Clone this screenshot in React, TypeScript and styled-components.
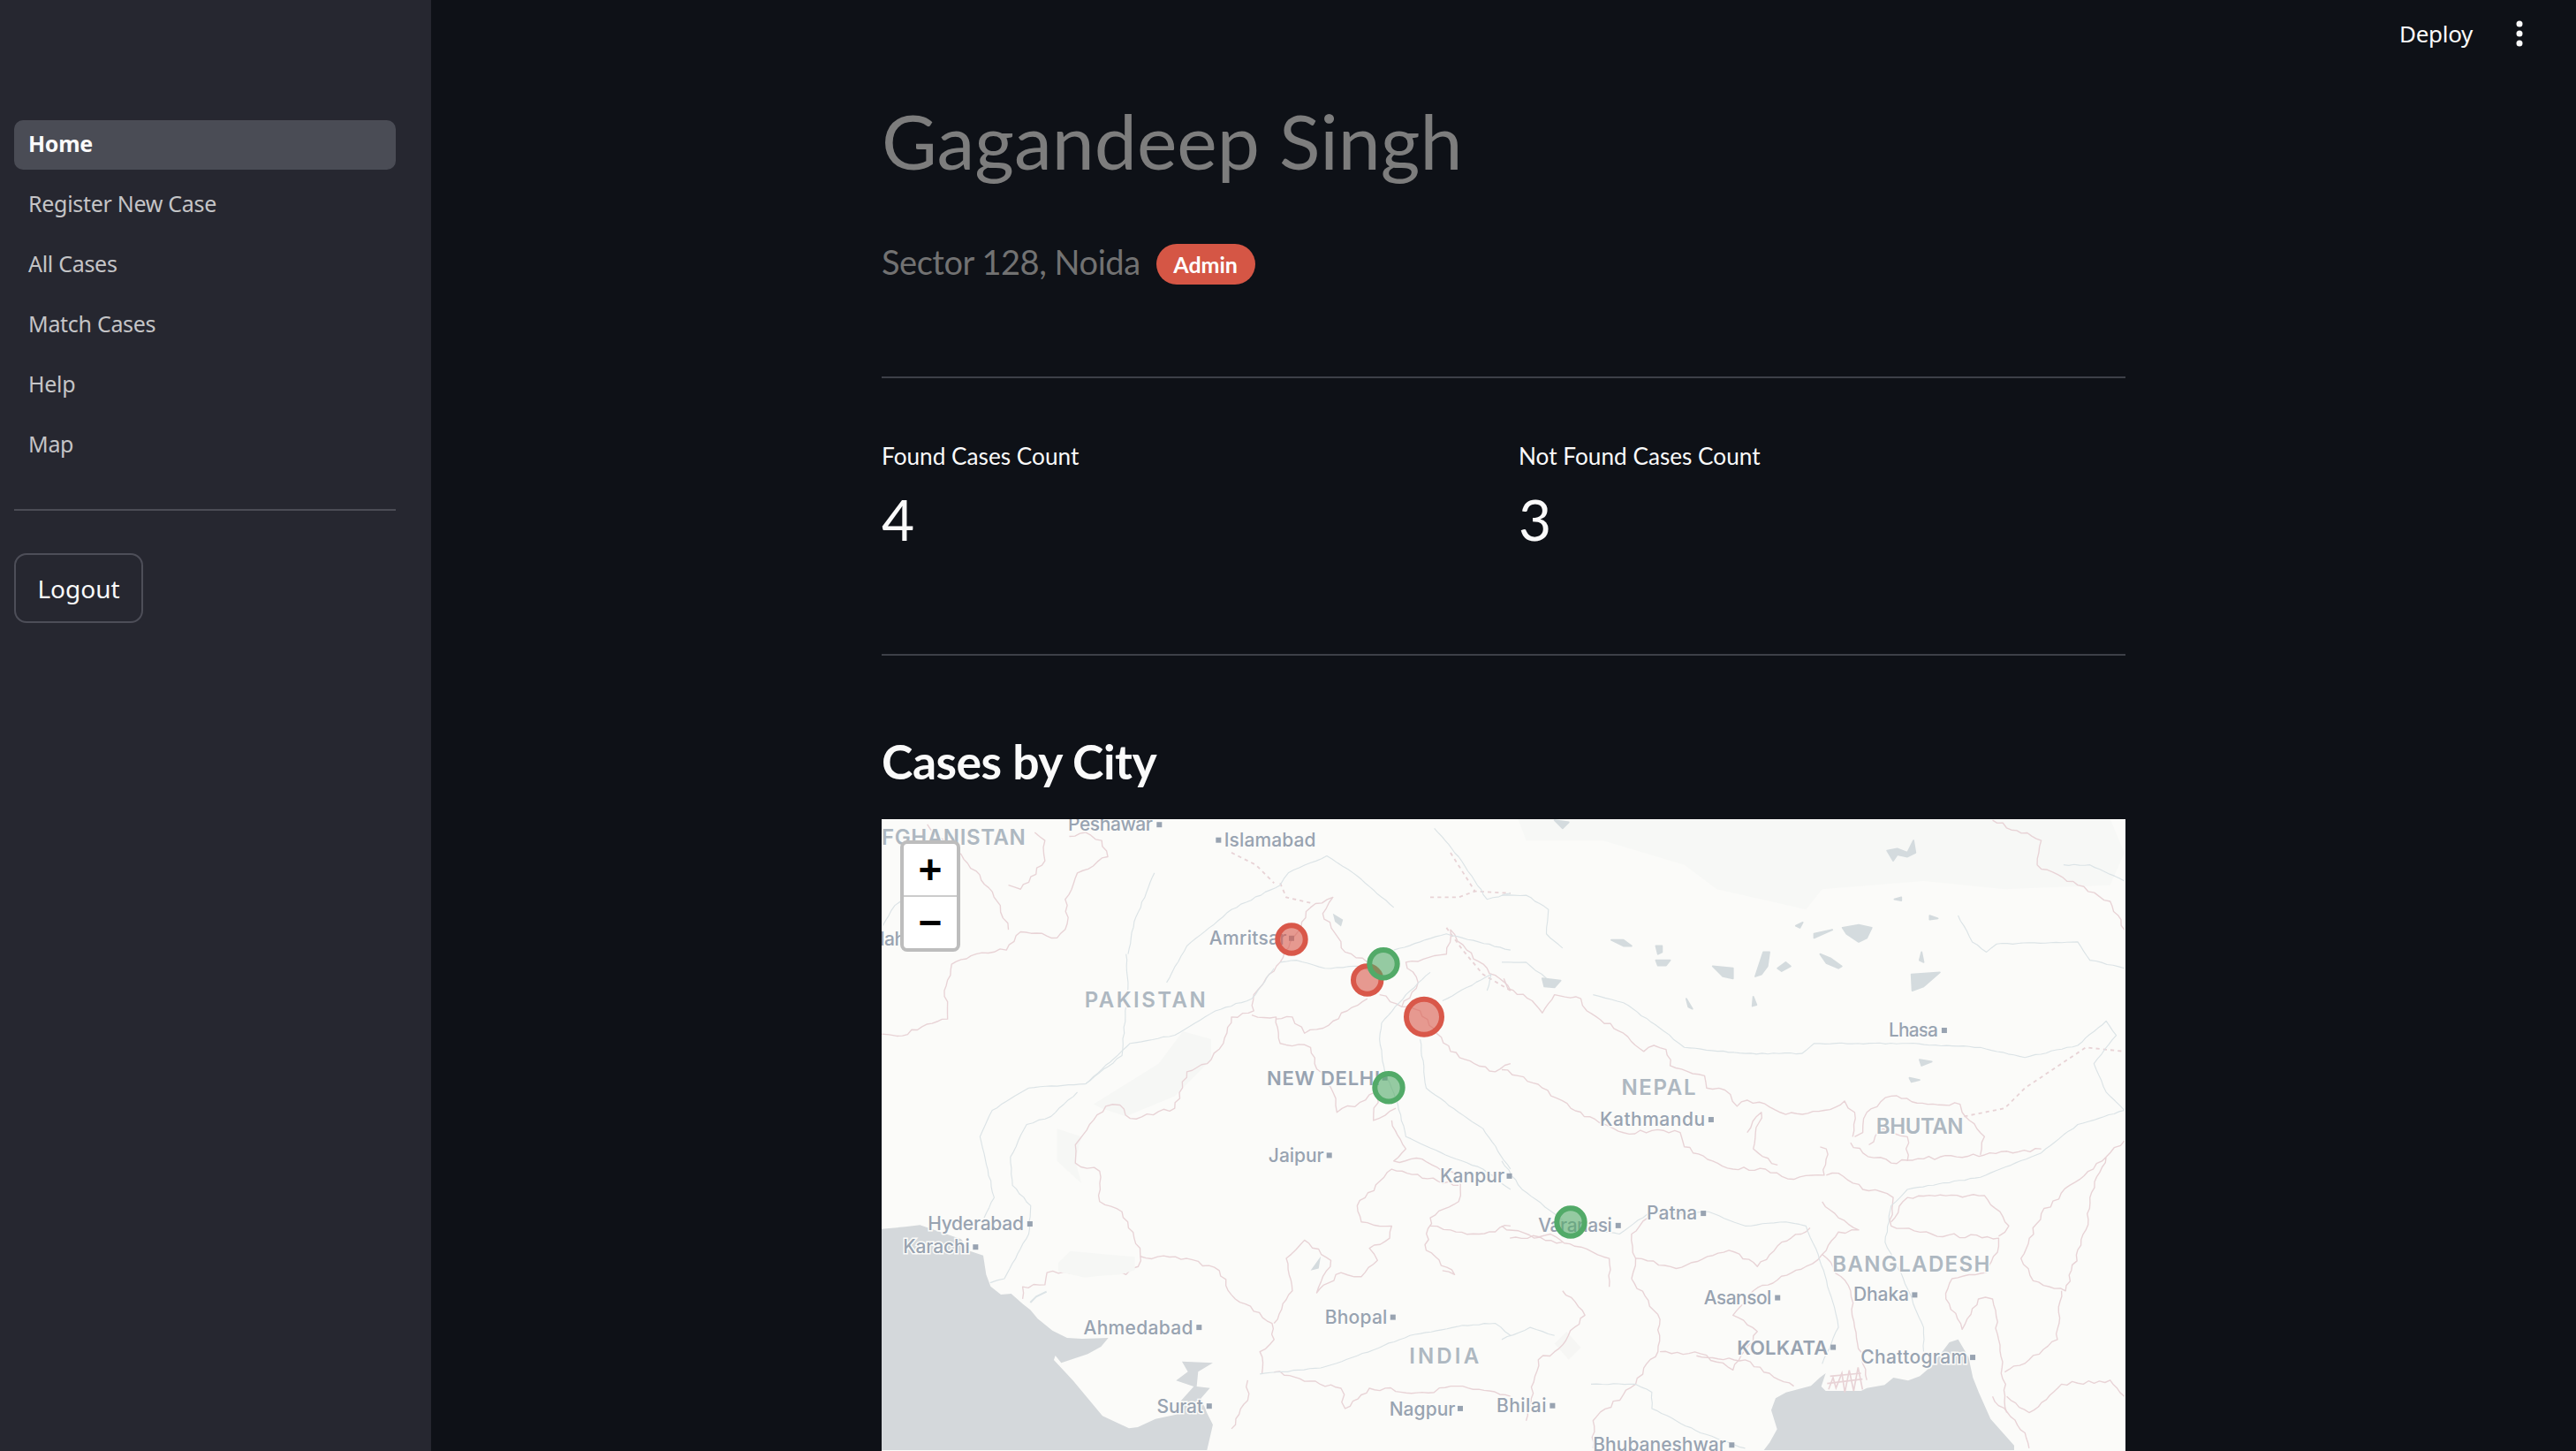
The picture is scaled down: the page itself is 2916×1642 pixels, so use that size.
import React from 'react';
import styled, { createGlobalStyle } from 'styled-components';

const GlobalStyle = createGlobalStyle`
  html, body {
    margin: 0;
    padding: 0;
    height: 100%;
    overflow: hidden;
    background: #0e1117;
  }
`;

const Page = styled.div`
  display: grid;
  grid-template-columns: 488px 1fr;
  height: 1642px;
  overflow: hidden;
  color: #fafafa;
  font-family: 'Noto Sans', sans-serif;
`;

const Sidebar = styled.aside`
  background: #262730;
  padding: 136px 40px 0 16px;
`;

const NavList = styled.nav`
  display: flex;
  flex-direction: column;
  gap: 12px;
`;

const NavItem = styled.a<{ $active?: boolean }>`
  display: flex;
  align-items: center;
  box-sizing: border-box;
  height: 56px;
  padding: 0 16px 5px;
  border-radius: 10px;
  font-size: 25px;
  letter-spacing: -0.3px;
  font-weight: ${({ $active }) => ($active ? 700 : 400)};
  color: ${({ $active }) => ($active ? '#fafafa' : 'rgba(250, 250, 250, .75)')};
  background: ${({ $active }) => ($active ? '#4a4c55' : 'transparent')};
`;

const SideRule = styled.hr`
  margin: 44px 0 48px;
  border: 0;
  border-top: 2px solid #4b4c55;
`;

const LogoutButton = styled.button`
  width: 146px;
  height: 79px;
  border: 2px solid #4d4e58;
  border-radius: 14px;
  background: transparent;
  color: #fafafa;
  font-family: 'Noto Sans', sans-serif;
  font-size: 28px;
  padding: 0;
`;

const Main = styled.main`
  display: flex;
  flex-direction: column;
  background: #0e1117;
`;

const Toolbar = styled.header`
  display: flex;
  justify-content: flex-end;
  align-items: center;
  gap: 49px;
  height: 76px;
  padding-right: 60px;
  flex: none;
`;

const DeployText = styled.span`
  font-size: 26px;
  letter-spacing: -0.3px;
  color: #fafafa;
`;

const MenuDots = styled.svg`
  width: 8px;
  height: 30px;
  fill: #fafafa;
`;

const Content = styled.div`
  width: 1408px;
  margin: 0 auto;
  font-family: Lato, sans-serif;
`;

const Title = styled.h1`
  margin: 30px 0 0;
  font-size: 86px;
  line-height: 106px;
  font-weight: 400;
  color: #7d7d7d;
`;

const SubRow = styled.div`
  display: flex;
  align-items: center;
  gap: 18px;
  margin-top: 64px;
  height: 46px;
`;

const Address = styled.span`
  margin-bottom: 6px;
  font-size: 38px;
  letter-spacing: -0.45px;
  color: #727272;
`;

const Badge = styled.span`
  display: flex;
  align-items: center;
  justify-content: center;
  width: 112px;
  height: 46px;
  border-radius: 23px;
  background: #d55645;
  color: #fff;
  font-size: 25px;
  font-weight: 700;
`;

const Rule = styled.hr`
  margin: 0;
  border: 0;
  border-top: 2px solid #3d4048;
`;

const TopRule = styled(Rule)`
  margin-top: 104px;
`;

const Stats = styled.div`
  display: grid;
  grid-template-columns: 721px 1fr;
  height: 312px;
  padding-top: 70px;
  box-sizing: border-box;
`;

const Stat = styled.div`
  display: flex;
  flex-direction: column;
`;

const StatLabel = styled.div`
  font-size: 26.2px;
  line-height: 36px;
  color: #fafafa;
`;

const StatValue = styled.div`
  margin-top: 12px;
  font-size: 64px;
  line-height: 84px;
  color: #fafafa;
`;

const SectionTitle = styled.h2`
  margin: 83px 0 0;
  font-size: 53.5px;
  line-height: 72px;
  font-weight: 700;
  color: #fafafa;
  letter-spacing: -0.5px;
`;

const MapFrame = styled.div`
  position: relative;
  height: 716px;
  margin-top: 30px;
  overflow: hidden;
  background: #fbfbf9;
`;

const MapSvg = styled.svg`
  display: block;
  width: 1408px;
  height: 716px;
`;

const ZoomControl = styled.div`
  position: absolute;
  left: 21px;
  top: 24px;
  width: 60px;
  border: 4px solid #bdbdbd;
  border-radius: 8px;
  overflow: hidden;
  background: #fff;
`;

const ZoomButton = styled.div<{ $top?: boolean }>`
  display: flex;
  align-items: center;
  justify-content: center;
  height: 58px;
  color: #000;
  font-family: 'Liberation Sans', sans-serif;
  font-size: 46px;
  font-weight: 700;
  line-height: 1;
  border-bottom: ${({ $top }) => ($top ? '2px solid #ccc' : 'none')};
`;

const labelSizes = { city: 21, capital: 22, country: 24 };

const PlaceLabel = styled.text<{ $kind: 'city' | 'country' | 'capital' }>`
  font-family: Inter, sans-serif;
  font-size: ${({ $kind }) => labelSizes[$kind]}px;
  font-weight: ${({ $kind }) => ($kind === 'city' ? 500 : 600)};
  fill: ${({ $kind }) => ($kind === 'country' ? '#aeb8c1' : '#98a3b1')};
  stroke: #fbfbf9;
  stroke-width: 3px;
  paint-order: stroke;
`;

const S = 1 / 2.178;
const BORDER = '#e8d3d6';

// wiggle a hand traced line so it reads as a map border and not a polygon
const noise = (n: number) => {
  const v = Math.sin(n * 12.9898) * 43758.5453;
  return v - Math.floor(v) - 0.5;
};

const roughen = (points: string, amp: number, step = 13) => {
  const pts = points.split(' ').map((p) => p.split(',').map(Number));
  const out: string[] = [];
  let seed = pts[0][0] * 0.37 + pts[0][1] * 0.11;
  pts.forEach((p, i) => {
    const next = pts[i + 1];
    out.push(p.join(','));
    if (!next) return;
    const dx = next[0] - p[0];
    const dy = next[1] - p[1];
    const len = Math.hypot(dx, dy);
    const count = Math.floor(len / step);
    for (let k = 1; k < count; k++) {
      seed += 1;
      const t = k / count;
      const d = noise(seed) * amp * 2;
      out.push(`${(p[0] + dx * t - (dy / len) * d).toFixed(1)},${(p[1] + dy * t + (dx / len) * d).toFixed(1)}`);
    }
  });
  return out.join(' ');
};

// x, baseline, right edge in the crop's units, then the city square if any
type Label = [string, number, number, number, 'city' | 'country' | 'capital', number?, number?];

const labels: Label[] = [
  ['AFGHANISTAN', -22, 80, 372, 'country'],
  ['Peshawar', 477, 45, 686, 'city', 702, 31],
  ['Islamabad', 862, 85, 1088, 'city', 848, 69],
  ['Kandahar', -85, 328, 118, 'city'],
  ['Amritsar', 825, 326, 1016, 'city', 1028, 311],
  ['PAKISTAN', 518, 482, 816, 'country'],
  ['NEW DELHI', 967, 672, 1246, 'capital', 1258, 655],
  ['Jaipur', 971, 862, 1108, 'city', 1121, 846],
  ['Kanpur', 1394, 912, 1553, 'city', 1565, 897],
  ['Hyderabad', 131, 1031, 368, 'city', 383, 1015],
  ['Karachi', 70, 1087, 235, 'city', 249, 1072],
  ['Ahmedabad', 515, 1287, 785, 'city', 800, 1270],
  ['Bhopal', 1110, 1262, 1264, 'city', 1278, 1245],
  ['INDIA', 1318, 1360, 1490, 'country'],
  ['Surat', 696, 1481, 810, 'city', 825, 1464],
  ['Nagpur', 1269, 1487, 1432, 'city', 1444, 1470],
];

const labelsRight: Label[] = [
  ['Bhilai', -13, 1478, 110, 'city', 125, 1463],
  ['Lhasa', 954, 553, 1076, 'city', 1091, 538],
  ['NEPAL', 295, 698, 478, 'country'],
  ['Kathmandu', 242, 774, 501, 'city', 516, 758],
  ['BHUTAN', 923, 792, 1138, 'country'],
  ['Varanasi', 90, 1034, 272, 'city', 287, 1019],
  ['Patna', 357, 1005, 482, 'city', 497, 989],
  ['Asansol', 498, 1213, 665, 'city', 680, 1197],
  ['BANGLADESH', 815, 1132, 1203, 'country'],
  ['Dhaka', 867, 1205, 1004, 'city', 1018, 1190],
  ['KOLKATA', 580, 1337, 804, 'capital', 817, 1319],
  ['Chattogram', 885, 1360, 1148, 'city', 1161, 1344],
  ['Bhubaneshwar', 225, 1575, 553, 'city', 567, 1560],
];

const bordersLeft = [
  '1000,370 965,410 935,450 935,490 880,505 860,570 830,610 770,640 740,730 700,738 630,755 605,722 570,725 530,770 495,820 495,865 555,885 555,960 610,985 640,1050 655,1090 650,1120 620,1140 560,1125 510,1135 425,1135 420,1165 365,1170 365,1200',
  '17,547 55,552 180,510 172,440 190,375 250,350 325,340 360,295 450,310 475,275 470,215 500,150 575,110 560,70 520,50 480,60',
  '330,180 360,190 420,120 420,70 395,50',
  '130,30 250,145 310,230 330,290',
  '655,1095 770,1100 850,1130 880,1190 980,1260 985,1300 950,1330 955,1385',
  '930,500 990,505 1000,570 1075,580 1085,620 1130,690 1140,740 1210,710 1235,690',
  '1000,370 1075,235 1130,210 1105,250 1160,345 1215,370',
  '1215,460 1165,490 1120,525 1060,545 1030,505 990,510',
  '1285,730 1230,760 1240,700',
  '1275,760 1310,830 1280,860 1350,855 1440,900 1440,960 1370,1000 1360,1080 1430,1140 1400,1130',
  '1440,920 1275,880 1190,970 1200,1010 1275,1020 1270,1050 1220,1075 1240,1105 1200,1145 1150,1135 1090,1185 1125,1105 1060,1055 1015,1100 1030,1180 985,1260',
  '1370,1020 1420,1030 1490,1040 1568,1020',
  '985,1380 1150,1420 1160,1470 1220,1420 1350,1430 1450,1415 1568,1440',
  '1300,480 1340,420 1310,370 1410,350 1420,290 1460,340 1568,440',
  '1245,450 1300,480 1345,490 1420,590 1530,640 1568,620',
  '880,1520 920,1450 920,1400',
];

const dashedLeft = [
  '1000,175 1015,210 1080,225',
  '880,100 940,130 985,175',
  '1410,285 1450,340 1500,400 1568,440',
  '1370,210 1440,210 1480,195',
  '1420,100 1480,195 1568,200',
];

const riversLeft = [
  '1280,235 1180,150 1115,108 1020,150 1000,180 880,240 770,330 720,420',
  '1000,370 1040,365 1110,385 1200,380 1250,410',
  '520,670 630,570 740,550 840,490 930,460 985,385',
  '520,670 380,680 290,735 260,800 295,950 270,1000',
  '500,690 435,750 375,770 335,850 340,920 385,970 380,1040 320,1150 285,1160',
  '620,350 625,420 610,600 520,670',
  '690,150 640,270 625,350',
  '1250,520 1245,560 1258,640 1290,720 1310,800 1420,850 1500,880 1568,930',
  '1345,560 1360,680 1440,740 1500,780 1568,880',
  '1250,520 1310,450 1370,395',
  '1400,465 1520,400 1510,440',
  '1280,340 1410,300 1568,340',
  '1190,1340 1320,1290 1450,1265 1530,1260 1568,1290',
  '950,1385 1100,1370 1190,1340',
  '1380,40 1440,110 1510,215 1568,200',
  '20,280 50,230 80,210',
];

const bordersRight = [
  '5,410 15,435 75,465 100,495 130,450 195,460 210,490 300,545 350,590 375,575 405,585 415,625 500,650 505,680 550,685 580,725 605,710 635,715 700,745 795,735 845,712 870,740 865,800',
  '0,635 40,650 100,680 170,730 240,765 300,790 370,785 440,790 450,825 520,860 570,880 650,880 720,905 795,895 800,830 785,825',
  '870,800 890,790 900,740 960,700 1050,720 1130,720 1135,740 1190,800 1180,845',
  '860,815 890,840 960,865 1080,850 1190,845 1330,830',
  '1535,810 1490,850 1450,950 1440,1030 1390,1180 1310,1155 1280,1100 1330,990 1400,920 1490,850',
  '800,895 830,890 890,930 950,940 965,950 960,1020 1060,1040 1225,1050 1225,1070 1195,1135 1110,1150 1095,1200 1135,1275 1175,1200 1210,1200 1225,1300 1245,1480',
  '790,960 830,1000 880,1030 830,1035 790,1090 860,1180 870,1270 900,1400',
  '960,1010 1000,950 1190,945 1250,1020 1225,1045',
  '265,1170 265,1100 180,1070 120,1040 20,1050',
  '320,1150 330,1100 320,1040 360,1000',
  '330,1100 430,1125 560,1080 630,1120 690,1060 760,1025',
  '150,1180 205,1240 130,1330 90,1350 60,1500',
  '320,1150 390,1250 385,1330 350,1370 330,1410 225,1500 225,1568',
  '390,1330 490,1335 570,1375 630,1280 570,1240 620,1180 750,1120 790,1090',
  '480,1340 600,1350 720,1415',
  '1210,20 1330,70 1320,130 1420,180 1500,220 1535,290',
  '1380,1180 1370,1300 1300,1350 1240,1380',
  '905,820 940,780 1000,800 1000,860',
  '605,790 640,740 620,830 680,870',
  '1245,1440 1300,1480 1380,1410 1500,1400 1535,1440',
  '1210,1440 1290,1530 1300,1568',
  '0,1020 80,1050 150,1060',
];

const riversRight = [
  '225,450 300,470 400,540 450,580 600,595 740,595 770,570 1000,570 1180,580 1290,605 1420,575 1490,515 1515,550 1460,620 1490,690 1535,735',
  '0,205 60,205 115,240 110,300 150,335',
  '0,370 60,370 110,410',
  '1125,255 1160,320 1195,345 1220,325 1420,320 1450,365 1535,385',
  '1385,130 1450,130 1535,170',
  '0,860 50,930 130,990 170,1020 290,1040 360,990 510,985 600,1020 700,1010 750,1020 780,1090 820,1220 830,1270 790,1360',
  '1535,735 1420,770 1330,840 1180,900 1000,930 960,970 945,1060 990,1150 1040,1270 1040,1330',
  '0,1300 70,1270 130,1290',
  '220,1410 330,1410 370,1430 370,1470 490,1530 600,1568',
];

const lakesRight = [
  '950,95 975,90 1000,100 1015,70 1020,100 1000,110 975,105 965,120',
  '770,300 815,290 770,310',
  '840,285 880,278 912,285 900,310 880,320 850,300',
  '520,380 570,385 570,410 545,405',
  '625,405 645,345 660,345 655,380 640,400',
  '680,385 700,370 712,380 690,392',
  '785,350 810,360 838,380 830,385 800,372',
  '1010,400 1080,395 1040,430 1012,440',
  '380,365 415,365 405,378 385,378',
  '380,330 395,330 395,345 385,350',
  '270,315 300,315 320,330 300,330',
  '100,410 145,415 130,432 105,430',
  '1035,345 1040,370 1030,365',
  '725,280 742,272 735,285',
  '1055,255 1075,262 1055,265',
  '620,455 628,475 618,478',
  '455,460 470,485 460,480',
  '1005,655 1030,660 1010,665',
  '968,215 985,210 985,218',
  '1030,610 1060,615 1035,625',
  '130,20 165,25 150,40',
];

// Arabian sea and Bay of Bengal, traced at 3x from their own crops
const westSea =
  '0,35 80,28 130,22 270,70 300,110 345,125 355,190 370,230 405,258 440,255 480,290 505,310 530,340 580,380 630,405 680,408 770,405 745,435 700,460 610,490 590,465 585,480 650,550 700,610 750,670 840,712 870,708 930,680 1000,665 1015,620 1060,570 1000,550 1040,520 1020,485 1125,490 1075,520 1070,570 1115,575 1085,610 1105,660 1125,700 1105,786 0,786';
const eastSea =
  '110,486 130,460 155,415 135,350 150,310 185,290 270,268 300,240 320,225 305,270 320,285 440,285 460,275 490,270 520,265 550,240 600,250 640,235 680,200 740,120 770,110 805,170 820,240 840,290 880,380 960,470 960,486';
const sundarbans = [
  '330,280 345,240 355,275 375,225 385,290 400,215 415,285 430,205 445,280',
  '325,260 445,245',
  '335,235 440,225',
];

const circles = [
  { x: 464, y: 136, r: 15.7, color: '#d9584a' },
  { x: 549.7, y: 182, r: 15.7, color: '#d9584a' },
  { x: 568, y: 163.7, r: 15.7, color: '#52aa68' },
  { x: 614, y: 223.7, r: 20, color: '#d9584a' },
  { x: 574, y: 303.7, r: 15.7, color: '#52aa68' },
  { x: 780, y: 456, r: 15.7, color: '#52aa68' },
];

const renderLabels = (list: Label[], dx: number) =>
  list.map(([text, x, y, right, kind, dotX, dotY]) => (
    <g key={text}>
      {dotX !== undefined && dotY !== undefined && (
        <rect x={dx + dotX * S - 3} y={dotY * S - 11} width={6} height={6} fill="#98a3b1" />
      )}
      <PlaceLabel
        $kind={kind}
        x={dx + x * S}
        y={y * S - 8}
        textLength={(right - x) * S}
        lengthAdjust="spacing"
      >
        {text}
      </PlaceLabel>
    </g>
  ));

const Lines = ({ list, amp }: { list: string[]; amp: number }) => (
  <>
    {list.map((p) => <polyline key={p} points={roughen(p, amp)} />)}
  </>
);

const CityMap = () => (
  <MapFrame>
    <MapSvg viewBox="0 0 1408 716">
      <g transform={`translate(-8,-8) scale(${S})`}>
        <polygon fill="#f6f7f5" points="540,720 700,620 760,540 830,560 830,610 740,700 620,750 560,730" />
        <polygon fill="#f6f7f5" points="450,780 510,800 495,860 510,915 450,860" />
        <g fill="none" stroke={BORDER} strokeWidth="3" strokeLinejoin="round">
          <Lines list={bordersLeft} amp={5} />
        </g>
        <g fill="none" stroke={BORDER} strokeWidth="4" strokeDasharray="9 9">
          {dashedLeft.map((p) => <polyline key={p} points={p} />)}
        </g>
        <g fill="none" stroke="#dbe3e6" strokeWidth="2.5" strokeLinejoin="round">
          <Lines list={riversLeft} amp={1.5} />
        </g>
        <polygon fill="#d4dbde" points="1130,250 1155,265 1150,282 1135,270" />
        <polygon fill="#d4dbde" points="1075,1130 1100,1095 1095,1125" />
      </g>
      <g transform="translate(0,452) scale(.3333)">
        <polygon fill="#f6f7f5" points="600,150 640,110 860,130 860,175 810,190 735,195 690,200 600,180" />
        <polygon fill="#d4d8db" points={westSea} />
        <polyline fill="none" stroke="#dbe3e6" strokeWidth="6" points="505,285 525,265 560,248" />
      </g>
      <g transform={`translate(702,-8) scale(${S})`}>
        <polygon
          fill="#f7f8f6"
          points="40,17 60,70 250,70 450,130 530,190 750,240 790,190 1040,170 1240,190 1500,180 1535,100 1500,17"
        />
        <polygon fill="#f6f6f4" points="130,1310 160,1280 195,1320 165,1350" />
        <g fill="none" stroke={BORDER} strokeWidth="3" strokeLinejoin="round">
          <Lines list={bordersRight} amp={5} />
        </g>
        <polyline
          fill="none"
          stroke={BORDER}
          strokeWidth="4"
          strokeDasharray="9 9"
          points="1140,750 1240,730 1290,680 1440,580 1535,590"
        />
        <g fill="none" stroke="#dbe3e6" strokeWidth="2.5" strokeLinejoin="round">
          <Lines list={riversRight} amp={1.5} />
        </g>
        <g fill="#d4dbde" stroke="#d4dbde" strokeWidth="4" strokeLinejoin="round">
          {lakesRight.map((p) => <polygon key={p} points={p} />)}
        </g>
      </g>
      <g transform="translate(962,552) scale(.3333)">
        <polygon fill="#d4d8db" points={eastSea} />
        <g fill="none" stroke={BORDER} strokeWidth="5">
          {sundarbans.map((p) => <polyline key={p} points={p} />)}
        </g>
      </g>
      {renderLabels(labels, -8)}
      {renderLabels(labelsRight, 702)}
      {circles.map((c) => (
        <circle
          key={`${c.x}-${c.y}`}
          cx={c.x}
          cy={c.y}
          r={c.r}
          fill={c.color}
          fillOpacity={0.6}
          stroke={c.color}
          strokeWidth={6}
        />
      ))}
    </MapSvg>
    <ZoomControl>
      <ZoomButton $top>+</ZoomButton>
      <ZoomButton>−</ZoomButton>
    </ZoomControl>
  </MapFrame>
);

const navItems = ['Home', 'Register New Case', 'All Cases', 'Match Cases', 'Help', 'Map'];

const App = () => (
  <>
    <GlobalStyle />
    <Page>
      <Sidebar>
        <NavList>
          {navItems.map((item, i) => (
            <NavItem key={item} $active={i === 0}>{item}</NavItem>
          ))}
        </NavList>
        <SideRule />
        <LogoutButton>Logout</LogoutButton>
      </Sidebar>
      <Main>
        <Toolbar>
          <DeployText>Deploy</DeployText>
          <MenuDots viewBox="0 0 8 30">
            <circle cx="4" cy="4" r="3.5" />
            <circle cx="4" cy="15" r="3.5" />
            <circle cx="4" cy="26" r="3.5" />
          </MenuDots>
        </Toolbar>
        <Content>
          <Title>Gagandeep Singh</Title>
          <SubRow>
            <Address>Sector 128, Noida</Address>
            <Badge>Admin</Badge>
          </SubRow>
          <TopRule />
          <Stats>
            <Stat>
              <StatLabel>Found Cases Count</StatLabel>
              <StatValue>4</StatValue>
            </Stat>
            <Stat>
              <StatLabel>Not Found Cases Count</StatLabel>
              <StatValue>3</StatValue>
            </Stat>
          </Stats>
          <Rule />
          <SectionTitle>Cases by City</SectionTitle>
          <CityMap />
        </Content>
      </Main>
    </Page>
  </>
);

export default App;
